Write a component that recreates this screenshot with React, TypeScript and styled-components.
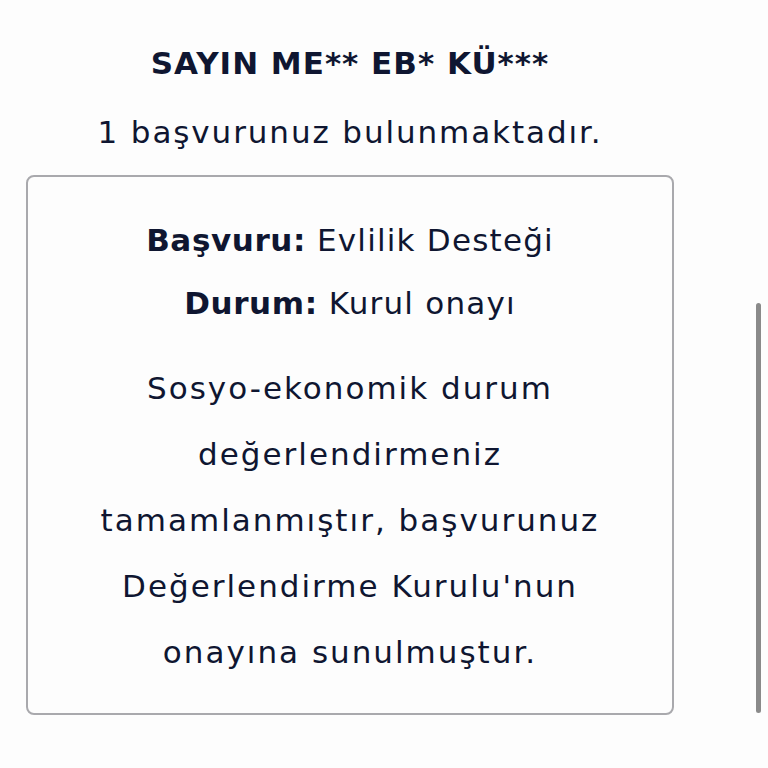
import React from 'react';
import styled, { createGlobalStyle } from 'styled-components';

const GlobalStyle = createGlobalStyle`
  html, body {
    margin: 0;
    padding: 0;
    background: #fdfdfd;
  }
  body {
    font-family: "DejaVu Sans", "Noto Sans", sans-serif;
    color: #0f1631;
    overflow: hidden;
  }
`;

const Page = styled.main`
  width: 700px;
  padding: 41px 26px 0;
  box-sizing: border-box;
  display: flex;
  flex-direction: column;
  align-items: center;
`;

const Greeting = styled.h1`
  margin: 0;
  font-size: 31px;
  font-weight: 700;
  line-height: 44px;
  letter-spacing: 1px;
`;

const Summary = styled.p`
  margin: 25px 0 0;
  font-size: 31px;
  font-weight: 400;
  line-height: 44px;
  letter-spacing: 1.9px;
`;

const Card = styled.section`
  align-self: stretch;
  margin-top: 21px;
  border: 2px solid #a9a9ad;
  border-radius: 8px;
  padding: 41px 30px 28px;
  display: flex;
  flex-direction: column;
  align-items: center;
  text-align: center;
`;

const InfoLine = styled.div<{ $gap?: number }>`
  font-size: 31px;
  line-height: 44px;
  letter-spacing: 1.2px;
  margin-top: ${p => p.$gap ?? 0}px;
`;

const Label = styled.strong`
  font-weight: 700;
  letter-spacing: 0.6px;
`;

const Message = styled.p`
  margin: 30px 0 0;
  font-size: 31px;
  line-height: 66px;
  letter-spacing: 2px;
  max-width: 560px;
`;

const ScrollThumb = styled.div`
  position: fixed;
  right: 7px;
  top: 303px;
  width: 5px;
  height: 410px;
  border-radius: 3px;
  background: #8a8a8a;
`;

const App = () => {
  return (
    <>
      <GlobalStyle />
      <Page>
        <Greeting>SAYIN ME** EB* KÜ***</Greeting>
        <Summary>1 başvurunuz bulunmaktadır.</Summary>
        <Card>
          <InfoLine>
            <Label>Başvuru:</Label> Evlilik Desteği
          </InfoLine>
          <InfoLine $gap={19}>
            <Label>Durum:</Label> Kurul onayı
          </InfoLine>
          <Message>
            Sosyo-ekonomik durum değerlendirmeniz tamamlanmıştır, başvurunuz Değerlendirme Kurulu'nun onayına sunulmuştur.
          </Message>
        </Card>
      </Page>
      <ScrollThumb />
    </>
  );
};

export default App;
